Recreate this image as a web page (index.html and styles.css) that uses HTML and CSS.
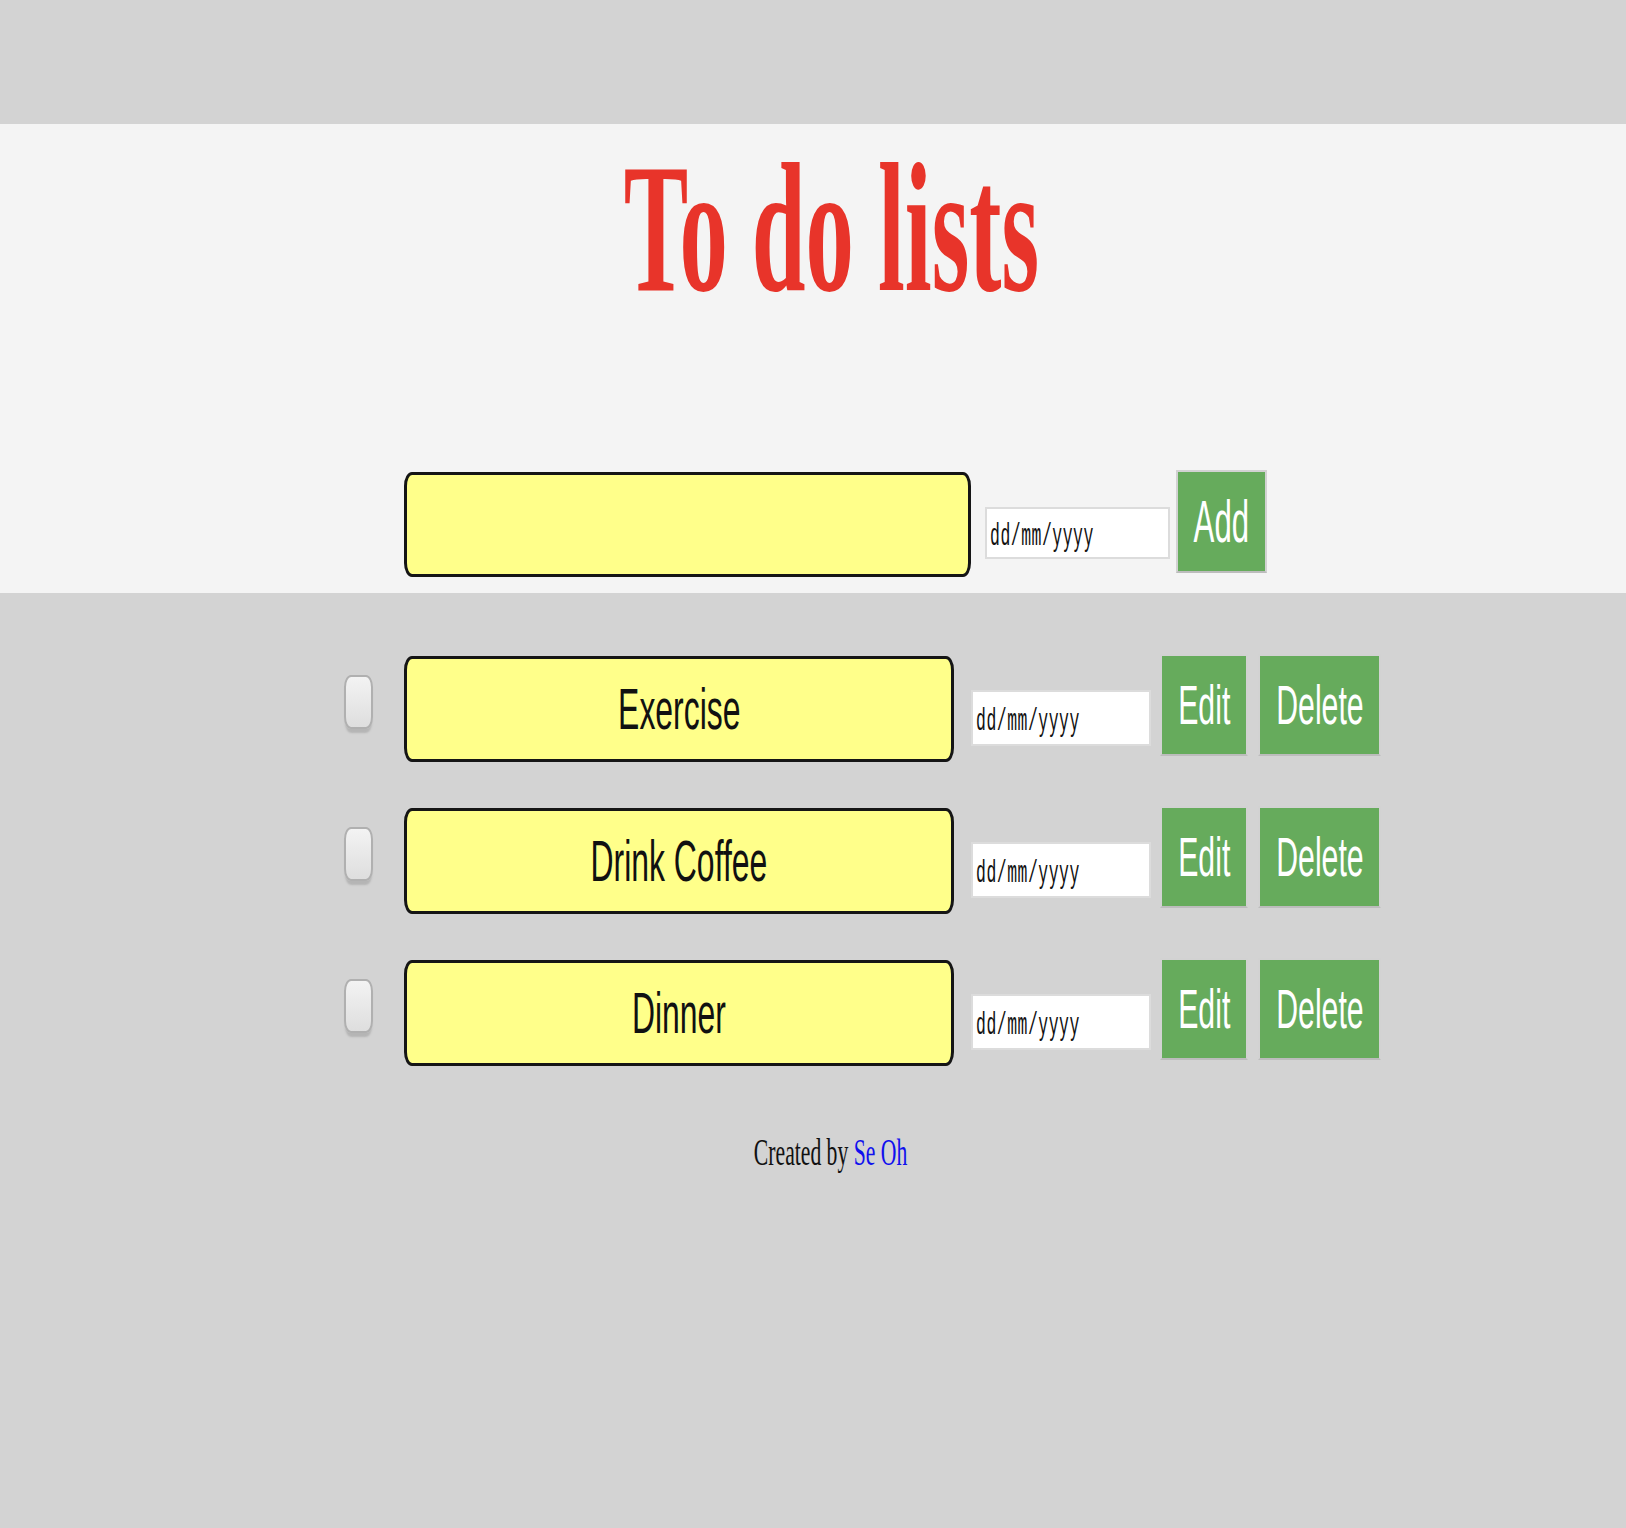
FILE: index.html
```html
<!DOCTYPE html>
<html lang="en">
<head>
<meta charset="utf-8">
<title>To do lists</title>
<link rel="stylesheet" href="styles.css">
</head>
<body>
<div class="topbar"></div>
<header class="hero">
  <h1 class="title"><span class="squeeze title-text">To do lists</span></h1>
  <form class="add-form">
    <div class="text-box add-input"></div>
    <div class="date-field add-date"><span class="squeeze date-text">dd/mm/yyyy</span></div>
    <button type="button" class="green-btn add-btn"><span class="squeeze btn-text add-text">Add</span></button>
  </form>
</header>
<main class="task-list">
  <div class="task-row">
    <input type="checkbox" class="check">
    <div class="text-box task-input"><span class="squeeze task-text">Exercise</span></div>
    <div class="date-field task-date"><span class="squeeze date-text">dd/mm/yyyy</span></div>
    <button type="button" class="green-btn edit-btn"><span class="squeeze btn-text">Edit</span></button>
    <button type="button" class="green-btn delete-btn"><span class="squeeze btn-text">Delete</span></button>
  </div>
  <div class="task-row">
    <input type="checkbox" class="check">
    <div class="text-box task-input"><span class="squeeze task-text">Drink Coffee</span></div>
    <div class="date-field task-date"><span class="squeeze date-text">dd/mm/yyyy</span></div>
    <button type="button" class="green-btn edit-btn"><span class="squeeze btn-text">Edit</span></button>
    <button type="button" class="green-btn delete-btn"><span class="squeeze btn-text">Delete</span></button>
  </div>
  <div class="task-row">
    <input type="checkbox" class="check">
    <div class="text-box task-input"><span class="squeeze task-text">Dinner</span></div>
    <div class="date-field task-date"><span class="squeeze date-text">dd/mm/yyyy</span></div>
    <button type="button" class="green-btn edit-btn"><span class="squeeze btn-text">Edit</span></button>
    <button type="button" class="green-btn delete-btn"><span class="squeeze btn-text">Delete</span></button>
  </div>
</main>
<footer class="footer"><span class="squeeze footer-text">Created by <a class="author" href="#">Se Oh</a></span></footer>
</body>
</html>
```

FILE: styles.css
```css
html, body {
  margin: 0;
  padding: 0;
}

body {
  background: #d3d3d3;
  font-family: "Liberation Sans", Arial, sans-serif;
  min-height: 1528px;
}

.squeeze {
  display: inline-block;
  white-space: nowrap;
  transform-origin: center center;
}

.topbar {
  height: 124px;
  background: #d3d3d3;
}

.hero {
  background: #f4f4f4;
  padding: 12px 0 16px;
}

.title {
  margin: 0;
  padding-left: 36px;
  text-align: center;
  font-family: "Liberation Serif", "Times New Roman", serif;
  font-weight: bold;
  font-size: 184px;
  line-height: 184px;
  color: #e8342a;
}

.title-text {
  transform: scaleX(0.525);
}

.add-form {
  margin: 150px 0 0;
  padding-left: 404px;
  display: flex;
  align-items: flex-start;
  height: 107px;
}

.text-box {
  box-sizing: border-box;
  background: #ffff8a;
  border: 3px solid #151515;
  border-radius: 8px / 14px;
  display: flex;
  align-items: center;
  justify-content: center;
}

.add-input {
  width: 567px;
  height: 105px;
  margin-top: 2px;
}

.date-field {
  box-sizing: border-box;
  background: #ffffff;
  border: 2px solid #dcdcdc;
  display: flex;
  align-items: center;
  padding-left: 3px;
}

.date-text {
  font-family: "Liberation Mono", "Courier New", monospace;
  font-size: 31px;
  line-height: 31px;
  letter-spacing: 1px;
  color: #111;
  transform: scaleX(0.53);
  transform-origin: left center;
  margin-top: 6px;
}

.add-date {
  width: 185px;
  height: 52px;
  margin: 37px 0 0 14px;
}

.green-btn {
  box-sizing: border-box;
  margin: 0;
  padding: 0;
  background: #66ab5c;
  border: 2px solid #d2d2d2;
  border-bottom-color: #bcbcbc;
  color: #fff;
  display: flex;
  align-items: center;
  justify-content: center;
  cursor: pointer;
}

.btn-text {
  font-family: "Liberation Sans", Arial, sans-serif;
  font-size: 56px;
  line-height: 56px;
  transform: scaleX(0.54);
}

.add-text {
  font-size: 60px;
  line-height: 60px;
  transform: scaleX(0.52);
}

.add-btn {
  width: 91px;
  height: 103px;
  margin-left: 6px;
}

.task-list {
  padding-top: 61px;
  display: flex;
  flex-direction: column;
  gap: 44px;
}

.task-row {
  display: flex;
  align-items: flex-start;
  padding-left: 344px;
  height: 108px;
}

.check {
  appearance: none;
  -webkit-appearance: none;
  box-sizing: border-box;
  margin: 21px 0 0;
  width: 29px;
  height: 54px;
  border: 2px solid #b0b0b0;
  border-radius: 7px / 12px;
  background: linear-gradient(#f3f3f3, #dedede);
  box-shadow: 0 5px 2px -1px #b5b5b5;
}

.task-input {
  width: 550px;
  height: 106px;
  margin: 2px 0 0 31px;
}

.task-text {
  font-family: "Liberation Sans", Arial, sans-serif;
  font-size: 57px;
  line-height: 57px;
  color: #111;
  transform: scaleX(0.56);
}

.task-date {
  width: 180px;
  height: 56px;
  margin: 36px 0 0 17px;
}

.edit-btn {
  width: 88px;
  height: 102px;
  margin-left: 9px;
}

.delete-btn {
  width: 123px;
  height: 102px;
  margin-left: 10px;
}

.footer {
  margin-top: 67px;
  padding-left: 36px;
  text-align: center;
  font-family: "Liberation Serif", "Times New Roman", serif;
  font-size: 38px;
  line-height: 38px;
  color: #111;
}

.footer-text {
  transform: scaleX(0.57);
}

.author {
  color: #1010ee;
  text-decoration: none;
}
```
